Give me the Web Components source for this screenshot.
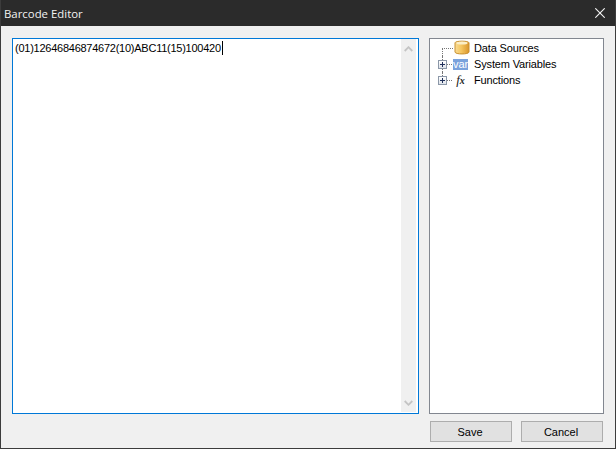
<!DOCTYPE html>
<html><head><meta charset="utf-8"><title>Barcode Editor</title>
<style>html,body{margin:0;padding:0;background:#f0f0f0}body{font:11px "Liberation Sans",sans-serif}</style>
</head><body>
<bc-dialog title-text="Barcode Editor">
  <bc-editor slot="editor">(01)12646846874672(10)ABC11(15)100420</bc-editor>
  <bc-tree slot="tree">
    <bc-node kind="db">Data Sources</bc-node>
    <bc-node kind="var" expand>System Variables</bc-node>
    <bc-node kind="fx" expand last>Functions</bc-node>
  </bc-tree>
  <bc-button slot="actions">Save</bc-button>
  <bc-button slot="actions">Cancel</bc-button>
</bc-dialog>
<script>
function def(name,html,init){customElements.define(name,class extends HTMLElement{constructor(){super();this.attachShadow({mode:'open'}).innerHTML=html(this)}connectedCallback(){if(init)init(this)}})}
def('bc-dialog',()=>`<style>
:host{display:flex;flex-direction:column;box-sizing:border-box;width:616px;height:449px;border:1px solid #3c3c3c;border-top:0;background:#f0f0f0;color:#000}
.bar{flex:none;height:26px;background:#2b2b2b;color:#f2f2f2;display:flex;align-items:center;justify-content:space-between;font:11.4px "Open Sans",sans-serif;padding:0 0 0 3px}
.bar svg{display:block;margin-right:10px}
.main{flex:none;display:flex;gap:10px;padding:12px 11px 0 11px;height:376px}
.act{display:flex;justify-content:flex-end;gap:9px;padding:7px 12px 0 0}
</style>
<div class="bar"><span id="t"></span><svg width="10" height="10" viewBox="0 0 10 10"><path d="M.3.3l9.4 9.4M9.7.3L.3 9.7" stroke="#f4f4f4" stroke-width="1.1" fill="none"/></svg></div>
<div class="main"><slot name="editor"></slot><slot name="tree"></slot></div>
<div class="act"><slot name="actions"></slot></div>`,e=>{e.shadowRoot.getElementById('t').textContent=e.getAttribute('title-text')});
def('bc-editor',()=>`<style>
:host{display:flex;box-sizing:border-box;width:407px;height:376px;border:1px solid #0078d7;background:#fff;font:11px "Liberation Sans",sans-serif;color:#000}
.txt{flex:1;padding:2px 0 0 2px;line-height:14px;letter-spacing:-.25px;white-space:nowrap}
.caret{display:inline-block;width:1px;height:14px;background:#000;vertical-align:top;margin-left:1px}
.sb{flex:none;width:15px;margin:0 2px 1px 0;background:#f0f0f0;display:flex;flex-direction:column;justify-content:space-between;align-items:center;padding:7px 0 6px}
.sb svg{display:block}
</style>
<div class="txt"><slot></slot><span class="caret"></span></div>
<div class="sb"><svg width="9" height="6" viewBox="0 0 9 6"><path d="M.7 5L4.5 1.2 8.3 5" stroke="#c4c4c4" stroke-width="1.8" fill="none"/></svg><svg width="9" height="6" viewBox="0 0 9 6"><path d="M.7 1L4.5 4.8 8.3 1" stroke="#c4c4c4" stroke-width="1.8" fill="none"/></svg></div>`);
def('bc-tree',()=>`<style>
:host{display:block;box-sizing:border-box;width:175px;height:376px;border:1px solid #828790;background:#fff;padding:1px 0 0 0;font:11px "Liberation Sans",sans-serif;position:relative}
</style><slot></slot>`);
const ICONS={
db:`<svg width="16" height="15" viewBox="0 0 16 15" style="display:block"><defs><linearGradient id="g" x1="0" x2="1"><stop offset="0" stop-color="#f8dc94"/><stop offset=".45" stop-color="#f5c660"/><stop offset="1" stop-color="#d9952a"/></linearGradient></defs><path d="M1 2.8C1 .6 15 .6 15 2.8V12C15 14.6 1 14.6 1 12Z" fill="url(#g)" stroke="#c9902f"/><ellipse cx="8" cy="3" rx="5.6" ry="1.5" fill="#fbeec6"/></svg>`,
var:`<span style="display:block;width:15px;height:11px;background:#7aa2dc;color:#fff;font:11px/10px 'Liberation Sans',sans-serif;text-align:center;letter-spacing:-.1px">var</span>`,
fx:`<span style="display:block;width:15px;color:#222;text-align:center;line-height:14px;white-space:nowrap"><span style="font:italic 13px/14px 'Liberation Serif',serif">f</span><span style="font:italic bold 10px/14px 'Liberation Serif',serif">x</span></span>`};
def('bc-node',e=>{const k=e.getAttribute('kind'),x=e.hasAttribute('expand'),last=e.hasAttribute('last');return `<style>
:host{display:block;height:16px}
.r{position:relative;height:16px;padding-left:44px;line-height:16px;white-space:nowrap;color:#000;letter-spacing:-.15px}
.v{position:absolute;left:12px;border-left:1px dotted #777}
.h{position:absolute;top:8px;left:${x?17:12}px;width:${x?5:11}px;border-top:1px dotted #777}
.box{position:absolute;left:8px;top:4px;box-sizing:border-box;width:9px;height:9px;border:1px solid #8b97a8;background:linear-gradient(#fff,#dfe3ea)}
.box:before{content:"";position:absolute;left:1px;right:1px;top:3px;height:1px;background:#1f2f5a}
.box:after{content:"";position:absolute;top:1px;bottom:1px;left:3px;width:1px;background:#1f2f5a}
.i{position:absolute;left:${k==='db'?24:23}px;top:${k==='var'?3:k==='db'?0:1}px}
</style><div class="r">
<div class="v" style="top:${k==='db'?8:0}px;height:${last?4:(k==='db'?8:16)}px"></div><div class="h"></div>
${x?'<div class="box"></div>':''}<div class="i">${ICONS[k]}</div><slot></slot></div>`});
def('bc-button',()=>`<style>
:host{display:flex;align-items:center;justify-content:center;box-sizing:border-box;width:82px;height:21px;padding-right:2px;background:#e1e1e1;border:1px solid #adadad;font:11px "Liberation Sans",sans-serif;color:#000}
</style><slot></slot>`);
</script>
</body></html>
